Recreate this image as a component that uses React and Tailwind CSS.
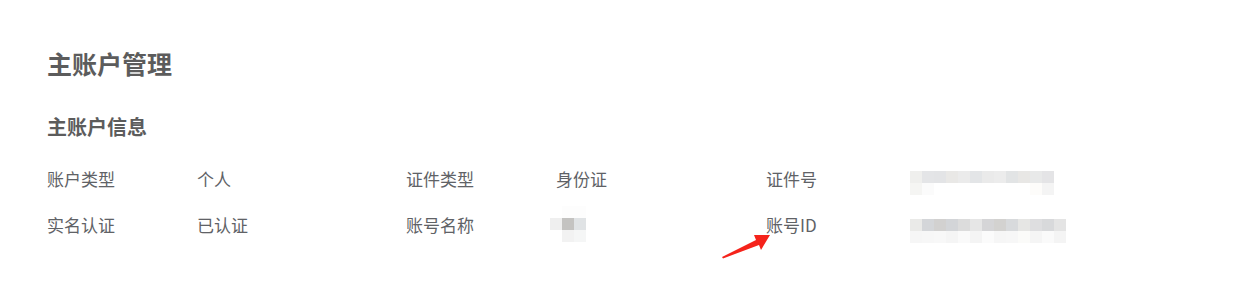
import React from "react";

const certNo = [
  ["#efefed", "#e4e5e7", "#e3e4e6", "#e9e8e6", "#ebebeb", "#e3e5e7", "#eaeaea", "#ececec", "#e2e4e5", "#e8e7e5", "#e8e9e9", "#e4e4e6"],
  ["#f5f5f3", "#fbfbfb", "#ffffff", "#ffffff", "#ffffff", "#ffffff", "#ffffff", "#ffffff", "#ffffff", "#ffffff", "#fdfcfa", "#f4f4f4"],
];

const accountId = [
  ["#eaeae8", "#d4d6d9", "#d2d1d0", "#d3d5d8", "#dcdcdc", "#e6e6e6", "#d5d5d7", "#d3d2d0", "#d8dadc", "#e6e6e4", "#dedee0", "#d8d9db", "#e4e4e4"],
  ["#f6f6f6", "#f7f7f7", "#f8f8f8", "#f5f5f5", "#fafafa", "#f4f4f4", "#fbfbfb", "#f6f6f6", "#f7f7f7", "#fbfbf9", "#f5f5f5", "#fafafa", "#f4f4f4"],
];

const accountName = [
  [null, "#fdfdfd", "#fdfdfd"],
  ["#efefef", "#c4c3c1", "#e0e3e5"],
  [null, "#f2f2f2", "#f5f6f6"],
];

// pixelated (blurred-out) value
const Mosaic = ({ rows, className }) => (
  <div className={className}>
    {rows.map((row, i) => (
      <div key={i} className="flex">
        {row.map((c, j) => (
          <div key={j} className="w-[12px] h-[12px]" style={{ backgroundColor: c || "transparent" }} />
        ))}
      </div>
    ))}
  </div>
);

const Text = ({ children }) => <div className="leading-[46px] text-[17px] text-[#606266]">{children}</div>;

export default function App() {
  return (
    <div
      className="relative w-[1237px] h-[283px] bg-white pl-[47px] pt-[46px]"
      style={{ fontFamily: '"Noto Sans CJK SC", "Noto Sans", sans-serif' }}
    >
      <h1 className="text-[25px] leading-[34px] font-bold text-[#5c5c5c]">主账户管理</h1>
      <h2 className="mt-[33px] text-[20px] leading-[28px] font-bold text-[#5c5c5c]">主账户信息</h2>

      <div className="mt-[15px] grid grid-cols-[150px_209px_150px_210px_144px_1fr] grid-rows-[46px_46px] items-start">
        <Text>账户类型</Text>
        <Text>个人</Text>
        <Text>证件类型</Text>
        <Text>身份证</Text>
        <Text>证件号</Text>
        <Mosaic rows={certNo} className="mt-[15px]" />

        <Text>实名认证</Text>
        <Text>已认证</Text>
        <Text>账号名称</Text>
        <Mosaic rows={accountName} className="mt-[4px] -ml-[6px]" />
        <Text>账号ID</Text>
        <Mosaic rows={accountId} className="mt-[17px]" />
      </div>

      {/* annotation arrow */}
      <svg className="absolute left-[715px] top-[222px]" width="65" height="40" viewBox="0 0 65 40">
        <path d="M7 35 L41 18 L39 13 L55 13 L46 28 L44 23 L8 36.5 Z" fill="#f5231b" />
      </svg>
    </div>
  );
}
